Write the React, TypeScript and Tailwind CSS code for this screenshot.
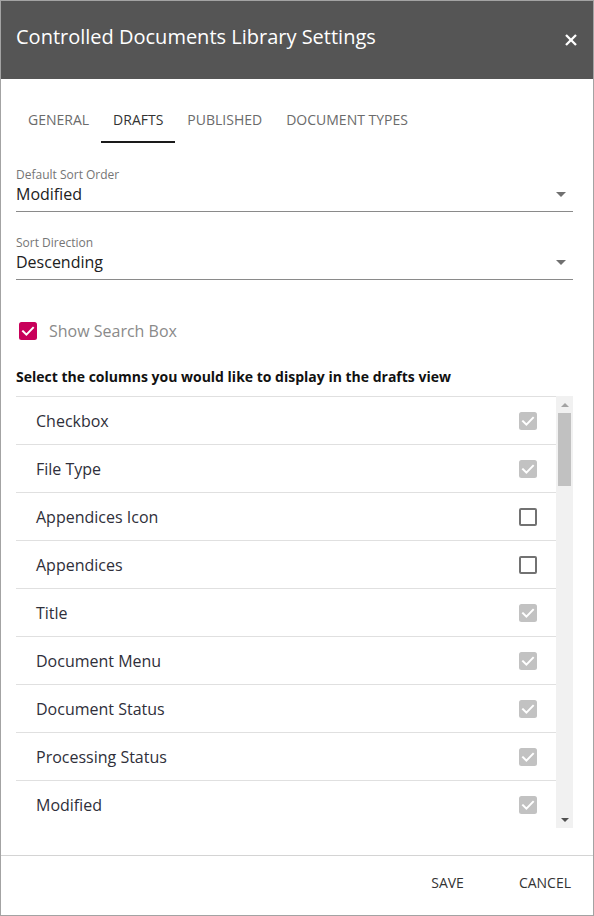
import React from "react";

const rows: { label: string; checked: boolean }[] = [
  { label: "Checkbox", checked: true },
  { label: "File Type", checked: true },
  { label: "Appendices Icon", checked: false },
  { label: "Appendices", checked: false },
  { label: "Title", checked: true },
  { label: "Document Menu", checked: true },
  { label: "Document Status", checked: true },
  { label: "Processing Status", checked: true },
  { label: "Modified", checked: true },
];

function Check({ color }: { color: string }) {
  return (
    <svg width="18" height="18" viewBox="0 0 18 18" className="block">
      <rect x="0" y="0" width="18" height="18" rx="2.5" fill={color} />
      <polyline
        points="4,9.3 7.4,12.6 14,5.8"
        fill="none"
        stroke="#ffffff"
        strokeWidth="2"
        strokeLinecap="square"
      />
    </svg>
  );
}

function Caret() {
  return (
    <svg width="10" height="5" viewBox="0 0 10 5" className="block">
      <polygon points="0,0 10,0 5,5" fill="#707070" />
    </svg>
  );
}

function Field({ label, value }: { label: string; value: string }) {
  return (
    <div className="flex flex-col border-b border-[#8a8a8a] pb-[6px]">
      <div className="text-[12px] leading-[16px] text-[#757575]">{label}</div>
      <div className="flex items-center justify-between leading-[22px]">
        <span className="text-[16px] text-[#212121]">{value}</span>
        <span className="mr-[7px] mt-[1px]">
          <Caret />
        </span>
      </div>
    </div>
  );
}

export default function App() {
  const tabs = ["GENERAL", "DRAFTS", "PUBLISHED", "DOCUMENT TYPES"];
  return (
    <div
      className="w-[594px] h-[916px] border border-[#a3a3a3] bg-white flex flex-col overflow-hidden"
      style={{ fontFamily: '"Open Sans", "Noto Sans", sans-serif' }}
    >
      {/* Header */}
      <div className="h-[78px] shrink-0 bg-[#555555] flex items-center justify-between pl-[15px] pr-[16px] pb-[7px]">
        <div className="text-[20px] leading-[28px] text-white">
          Controlled Documents Library Settings
        </div>
        <svg width="12" height="12" viewBox="0 0 12 12" className="block mt-[6px]">
          <line x1="1" y1="1" x2="11" y2="11" stroke="#ffffff" strokeWidth="2.3" />
          <line x1="11" y1="1" x2="1" y2="11" stroke="#ffffff" strokeWidth="2.3" />
        </svg>
      </div>

      <div className="flex flex-col pl-[15px] pr-[20px]">
        {/* Tabs */}
        <div className="flex mt-[18px]">
          {tabs.map((t) => {
            const active = t === "DRAFTS";
            return (
              <div
                key={t}
                className={
                  "px-[12px] pt-[13px] pb-[11px] text-[14px] leading-[20px] border-b-2 " +
                  (active
                    ? "border-[#1a1a1a] text-[#333333]"
                    : "border-transparent text-[#6b6b6b]")
                }
              >
                {t}
              </div>
            );
          })}
        </div>

        <div className="mt-[24px]">
          <Field label="Default Sort Order" value="Modified" />
        </div>
        <div className="mt-[23px]">
          <Field label="Sort Direction" value="Descending" />
        </div>

        {/* Show search box */}
        <div className="mt-[39px] h-[24px] flex items-center pl-[3px]">
          <Check color="#c8005a" />
          <span className="ml-[12px] text-[16px] leading-[24px] text-[#8a8a8a]">
            Show Search Box
          </span>
        </div>

        <div className="mt-[24px] text-[14px] leading-[20px] font-bold text-[#111111]">
          Select the columns you would like to display in the drafts view
        </div>

        {/* List */}
        <div className="mt-[9px] h-[432px] flex">
          <div className="flex-1 h-[432px] overflow-hidden border-t border-[#e0e0e0]">
            {rows.map((r) => (
              <div
                key={r.label}
                className="h-[48px] border-b border-[#e0e0e0] flex items-center justify-between pl-[20px] pr-[19px]"
              >
                <span className="text-[16px] leading-[24px] text-[#2f2f3a]">{r.label}</span>
                {r.checked ? (
                  <Check color="#c2c2c2" />
                ) : (
                  <div className="w-[18px] h-[18px] rounded-[2px] border-2 border-[#727272]" />
                )}
              </div>
            ))}
          </div>
          {/* Scrollbar */}
          <div className="w-[17px] h-[432px] bg-[#f1f1f1] flex flex-col">
            <div className="h-[17px] flex items-center justify-center">
              <svg width="8" height="4" viewBox="0 0 8 4" className="block">
                <polygon points="0,4 8,4 4,0" fill="#a3a3a3" />
              </svg>
            </div>
            <div className="flex-1 flex justify-center">
              <div className="w-[13px] h-[73px] bg-[#c1c1c1]" />
            </div>
            <div className="h-[17px] flex items-center justify-center">
              <svg width="8" height="4" viewBox="0 0 8 4" className="block">
                <polygon points="0,0 8,0 4,4" fill="#505050" />
              </svg>
            </div>
          </div>
        </div>
      </div>

      {/* Footer */}
      <div className="mt-[27px] border-t border-[#d4d4d4] h-[60px] flex justify-end gap-[55px] pr-[22px] pt-[17px]">
        <span className="text-[14px] leading-[20px] text-[#333333]">SAVE</span>
        <span className="text-[14px] leading-[20px] text-[#333333]">CANCEL</span>
      </div>
    </div>
  );
}
